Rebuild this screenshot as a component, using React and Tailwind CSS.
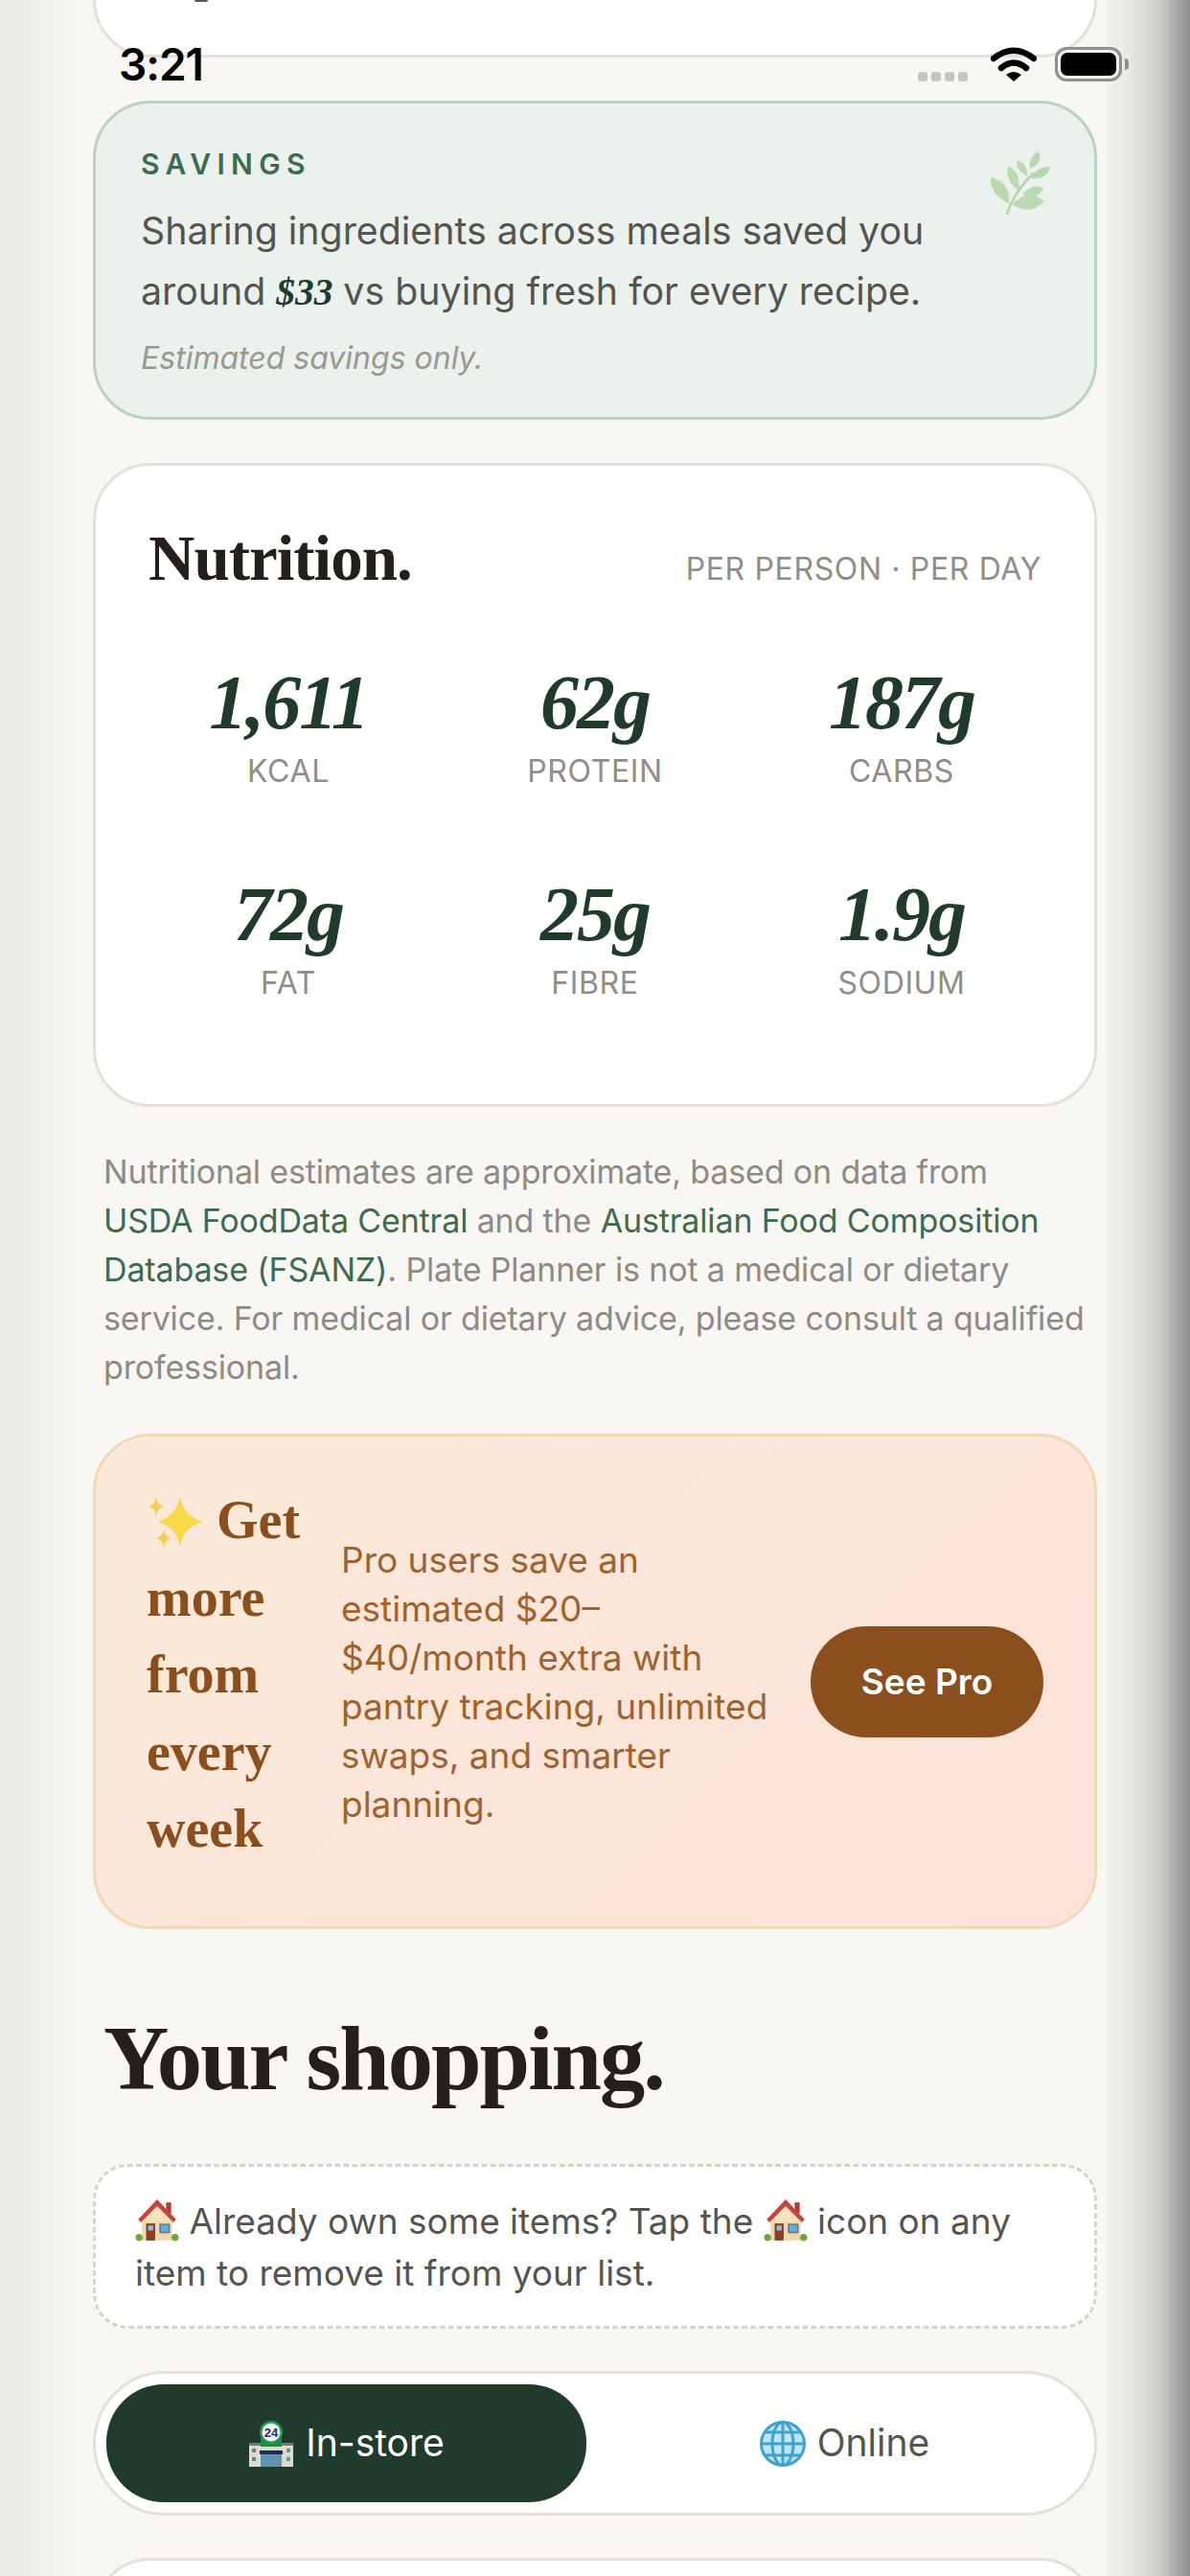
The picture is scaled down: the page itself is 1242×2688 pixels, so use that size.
import React from 'react';

const sans = "font-['Inter','Noto_Sans',sans-serif]";
const serif = "font-['Liberation_Serif','DejaVu_Serif',serif]";

const nutrition = [
    { value: '1,611', label: 'KCAL' },
    { value: '62g', label: 'PROTEIN' },
    { value: '187g', label: 'CARBS' },
    { value: '72g', label: 'FAT' },
    { value: '25g', label: 'FIBRE' },
    { value: '1.9g', label: 'SODIUM' },
];

const Wifi = () => (
    <svg width="48" height="36" viewBox="0 0 48 36" fill="none">
        <path d="M3 12 Q24 -4.5 45 12" stroke="#000" strokeWidth="6.5" strokeLinecap="round" />
        <path d="M11 22 Q24 11 37 22" stroke="#000" strokeWidth="6.5" strokeLinecap="round" />
        <path d="M24 36 L16 29 Q24 23 32 29Z" fill="#000" />
    </svg>
);

const Leaf = () => (
    <svg width="63" height="67" viewBox="0 0 63 67" className="mt-[5px] shrink-0">
        <path d="M18 66 Q24 44 46 22" stroke="#b9d3b0" strokeWidth="2.5" fill="none" />
        <path d="M23 55 Q40 38 57 52 Q42 68 23 55Z" fill="#bcd9b5" />
        <path d="M34 45 Q44 33 56 38 Q50 52 34 45Z" fill="#bcd9b3" />
        <path d="M43 28 Q48 16 63 16 Q60 30 43 28Z" fill="#b8d8ae" />
        <path d="M42 18 Q40 6 51 0 Q56 12 42 18Z" fill="#b8d8ae" />
        <path d="M39 26 Q27 20 28 9 Q40 12 39 26Z" fill="#bcdab3" />
        <path d="M30 40 Q16 32 19 15 Q33 22 30 40Z" fill="#bbd9b2" />
        <path d="M20 54 Q0 45 1 27 Q22 32 20 54Z" fill="#bad8b0" />
    </svg>
);

const Sparkles = () => (
    <svg width="59" height="55" viewBox="0 0 59 55" className="inline-block align-[-10px]">
        <path d="M35 2 Q38 22 59 28 Q38 33 35 54 Q31 33 11 28 Q31 22 35 2Z" fill="#fbd84a" />
        <path d="M10 2 Q11 10 18 12 Q11 14 10 22 Q9 14 2 12 Q9 10 10 2Z" fill="#f6cc52" />
        <path d="M18 36 Q19 43 25 45 Q19 47 18 55 Q17 47 10 45 Q17 43 18 36Z" fill="#f6cc52" />
    </svg>
);

const House = () => (
    <svg width="46" height="46" viewBox="0 0 44 44" className="inline-block align-[-9px]">
        <rect x="31" y="4" width="5" height="11" fill="#a8402f" />
        <rect x="7" y="18" width="30" height="24" fill="#f1d9ad" />
        <path d="M22 1 L41 21 L38 24 L22 8 L6 24 L3 21Z" fill="#c8433a" />
        <path d="M22 8 L37 23 L7 23Z" fill="#f5e3c0" />
        <rect x="11" y="25" width="9" height="17" fill="#8c3f26" />
        <rect x="13" y="27" width="5" height="5" fill="#7fc3e6" />
        <rect x="25" y="26" width="9" height="8" fill="#5fb0dc" stroke="#6b7580" strokeWidth="1.5" />
        <circle cx="4" cy="39" r="3.5" fill="#6fa53a" />
        <circle cx="40" cy="39" r="3.5" fill="#6fa53a" />
    </svg>
);

const Store = () => (
    <svg width="48" height="48" viewBox="0 0 48 48" className="shrink-0">
        <rect x="1" y="24" width="46" height="24" fill="#dcdbcc" />
        <rect x="1" y="23" width="46" height="3" fill="#6f7884" />
        <rect x="4" y="29" width="4" height="4" fill="#70808a" />
        <rect x="4" y="38" width="4" height="4" fill="#70808a" />
        <rect x="40" y="29" width="4" height="4" fill="#5f9aa8" />
        <rect x="40" y="38" width="4" height="4" fill="#5f9aa8" />
        <rect x="12" y="31" width="24" height="4" fill="#1f2a5a" />
        <rect x="13" y="35" width="22" height="13" fill="#5d93ad" />
        <rect x="13" y="18" width="22" height="9" fill="#218a46" />
        <circle cx="24" cy="12" r="12" fill="#1f9a4d" />
        <circle cx="24" cy="12" r="9.5" fill="#f4f4f6" />
        <text x="24" y="17" textAnchor="middle" fontSize="13" fontWeight="700" fill="#2b2c6e" fontFamily="Liberation Sans">24</text>
    </svg>
);

const Globe = () => (
    <svg width="48" height="48" viewBox="0 0 48 48" className="shrink-0" fill="none">
        <circle cx="24" cy="24" r="23" fill="#bfe4f2" />
        <g stroke="#3ea2cc" strokeWidth="3">
            <circle cx="24" cy="24" r="22.5" />
            <ellipse cx="24" cy="24" rx="11" ry="22.5" />
            <path d="M24 1.5 V46.5 M1.5 24 H46.5 M5 12 H43 M5 36 H43" />
        </g>
    </svg>
);

export default function App() {
    return (
        <div className={`${sans} relative h-[2688px] w-full overflow-hidden bg-[#f9f7f3]`}>
            {/* soft page edges */}
            <div className="pointer-events-none absolute inset-y-0 left-0 w-[90px] bg-gradient-to-r from-[#e9e9e5] to-[#f9f7f3]" />
            <div className="pointer-events-none absolute inset-y-0 right-0 w-[87px] bg-[linear-gradient(to_right,#f3f1ed,#e9e7e3_28%,#cfcecb_62%,#8f8f8f)]" />

            {/* status bar */}
            <div className="absolute inset-x-0 top-[44px] z-10 flex h-[46px] items-start pl-[124px]">
                <span className="text-[46px] leading-[46px] font-semibold text-black tracking-[-1px]">3:21</span>
                <div className="ml-[746px] mt-[31px] flex gap-[4px]">
                    <span className="h-[10px] w-[10px] rounded-[3px] bg-[#c6c5c1]" />
                    <span className="h-[10px] w-[10px] rounded-[3px] bg-[#c6c5c1]" />
                    <span className="h-[10px] w-[10px] rounded-[3px] bg-[#c6c5c1]" />
                    <span className="h-[10px] w-[10px] rounded-[3px] bg-[#c6c5c1]" />
                </div>
                <div className="ml-[24px] mt-[5px]"><Wifi /></div>
                <div className="ml-[19px] mt-[5px] flex items-center">
                    <div className="h-[36px] w-[70px] rounded-[12px] border-[3px] border-[#8f8f8d] p-[3px]">
                        <div className="h-full w-full rounded-[7px] bg-black" />
                    </div>
                    <div className="ml-[3px] h-[12px] w-[4px] rounded-r-full bg-[#8f8f8d]" />
                </div>
            </div>

            <div className="relative flex flex-col pl-[97px] pr-[97px]">
                {/* end of the card above */}
                <div className="relative -mt-[100px] h-[160px] rounded-[60px] border-[3px] border-[#e4e0da] bg-white">
                    <span className="absolute left-[103px] top-[97px] h-[2px] w-[14px] rounded-b-full bg-[#55554f]" />
                </div>

                {/* savings */}
                <section className="mt-[45px] flex h-[333px] justify-between rounded-[60px] border-[3px] border-[#b9d3c1] bg-[#ebf1ec] pl-[47px] pr-[46px] pt-[45px]">
                    <div>
                        <p className="text-[30px] leading-[36px] font-semibold tracking-[0.21em] text-[#3d6b4f]">SAVINGS</p>
                        <p className="mt-[20px] w-[850px] text-[39.3px] leading-[63px] text-[#55554f]">
                            Sharing ingredients across meals saved you around{' '}
                            <em className={`${serif} font-bold text-[#203a2c]`}>$33</em> vs buying fresh for every recipe.
                        </p>
                        <p className="mt-[17px] text-[32px] leading-[40px] italic text-[#9b9791]">Estimated savings only.</p>
                    </div>
                    <Leaf />
                </section>

                {/* nutrition */}
                <section className="mt-[45px] h-[672px] rounded-[60px] border-[3px] border-[#e4e0da] bg-white pl-[55px] pr-[55px] pt-[57px]">
                    <div className="flex items-baseline justify-between">
                        <h2 className={`${serif} text-[67px] leading-[78px] font-bold tracking-[-1px] text-[#231f1a]`}>Nutrition.</h2>
                        <span className="text-[32px] tracking-[0.02em] text-[#918d87]">PER PERSON · PER DAY</span>
                    </div>
                    <div className="mt-[72px] grid grid-cols-3 gap-x-0 gap-y-[90px] -mx-[14px]">
                        {nutrition.map((item) => (
                            <div key={item.label} className="flex flex-col items-center">
                                <span className={`${serif} text-[80px] leading-[80px] font-bold italic tracking-[-2px] text-[#203a2c]`}>{item.value}</span>
                                <span className="mt-[13px] text-[32px] leading-[38px] tracking-[0.02em] text-[#918d87]">{item.label}</span>
                            </div>
                        ))}
                    </div>
                </section>

                {/* disclaimer */}
                <p className="mt-[42px] -mr-[14px] ml-[11px] text-[34px] leading-[51px] tracking-[-0.15px] text-[#8e8a84]">
                    Nutritional estimates are approximate, based on data from<br />
                    <span className="text-[#3d6b4f]">USDA FoodData Central</span> and the{' '}
                    <span className="text-[#3d6b4f]">Australian Food Composition Database (FSANZ)</span>. Plate Planner is not a medical or dietary service. For medical or dietary advice, please consult a qualified professional.
                </p>

                {/* pro upsell */}
                <section className="mt-[44px] flex h-[517px] items-center rounded-[60px] border-[3px] border-[#f0d9b8] bg-[linear-gradient(135deg,#faead9,#fde2da)] pl-[53px] pr-[53px]">
                    <h3 className={`${serif} w-[203px] shrink-0 pb-[14px] text-[56px] leading-[80.5px] font-bold text-[#8b4f1e]`}>
                        <Sparkles /> Get more from every week
                    </h3>
                    <p className="w-[490px] shrink-0 pr-[30px] text-[37px] leading-[51px] text-[#a0622f]">
                        Pro users save an estimated $20–$40/month extra with pantry tracking, unlimited swaps, and smarter planning.
                    </p>
                    <button className="h-[116px] w-[243px] shrink-0 rounded-full bg-[#8b4f1e] text-[37px] font-semibold text-white">See Pro</button>
                </section>

                <h2 className={`${serif} mt-[83px] ml-[11px] text-[94.5px] leading-[104px] font-bold tracking-[-2px] text-[#231f1a]`}>Your shopping.</h2>

                {/* tip */}
                <div className="mt-[58px] h-[172px] rounded-[36px] border-[3px] border-dashed border-[#d8d4cc] bg-white pl-[41px] pr-[30px] pt-[30px] text-[37px] leading-[54px] text-[#55554f]">
                    <House /> Already own some items? Tap the <House /> icon on any item to remove it from your list.
                </div>

                {/* in-store / online toggle */}
                <div className="mt-[44px] flex h-[151px] items-center rounded-full border-[3px] border-[#e4e0da] bg-white pl-[11px] pr-[11px]">
                    <button className="flex h-[123px] w-[501px] items-center justify-center gap-[12px] rounded-[60px] bg-[#203a2c] text-[39px] text-white">
                        <Store /> In-store
                    </button>
                    <button className="flex h-[123px] flex-1 items-center justify-center gap-[12px] rounded-[60px] pl-[20px] text-[39px] text-[#55554f]">
                        <Globe /> Online
                    </button>
                </div>

                {/* next card, cut off by the screen */}
                <div className="mt-[44px] h-[120px] rounded-[60px] border-[3px] border-[#e4e0da] bg-white" />
            </div>
        </div>
    );
}
